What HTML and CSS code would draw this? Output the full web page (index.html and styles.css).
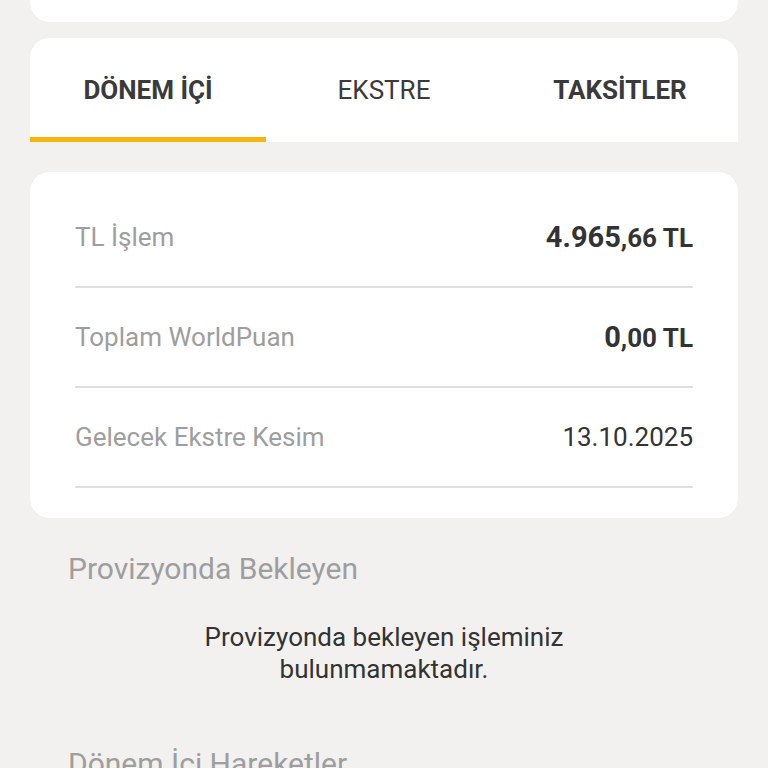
FILE: index.html
```html
<!DOCTYPE html>
<html lang="tr">
<head>
  <meta charset="UTF-8" />
  <meta name="viewport" content="width=device-width, initial-scale=1.0"/>
  <title>Kart Detay</title>
  <link rel="stylesheet" href="styles.css">
</head>
<body>
  <div class="top-card"></div>

  <div class="tabs">
    <div class="tab active">DÖNEM İÇİ</div>
    <div class="tab">EKSTRE</div>
    <div class="tab bold">TAKSİTLER</div>
  </div>

  <div class="summary">
    <div class="row">
      <span class="label">TL İşlem</span>
      <span class="value"><span class="int">4.965</span>,66 TL</span>
    </div>
    <div class="row">
      <span class="label">Toplam WorldPuan</span>
      <span class="value"><span class="int">0</span>,00 TL</span>
    </div>
    <div class="row">
      <span class="label">Gelecek Ekstre Kesim</span>
      <span class="date">13.10.2025</span>
    </div>
  </div>

  <h2 class="section-title">Provizyonda Bekleyen</h2>
  <p class="empty">Provizyonda bekleyen işleminiz<br>bulunmamaktadır.</p>

  <h2 class="section-title next">Dönem İçi Hareketler</h2>
</body>
</html>
```

FILE: styles.css
```css
* {
  box-sizing: border-box;
}
body {
  font-family: Roboto, 'Noto Sans', sans-serif;
  background: #f2f1f0;
  color: #333;
  margin: 0;
  padding: 0 30px;
  height: 768px;
  overflow: hidden;
}
.top-card {
  height: 22px;
  background: #fff;
  border-radius: 0 0 20px 20px;
}
.tabs {
  margin-top: 16px;
  height: 104px;
  background: #fff;
  border-radius: 20px 20px 0 0;
  display: flex;
}
.tab {
  flex: 1;
  display: flex;
  align-items: center;
  justify-content: center;
  padding-top: 4px;
  font-size: 26px;
  color: #3a3a3a;
  border-bottom: 5px solid transparent;
}
.tab.active {
  font-weight: 700;
  border-bottom-color: #f5b50a;
}
.tab.bold {
  font-weight: 700;
}
.summary {
  margin-top: 30px;
  background: #fff;
  border-radius: 20px;
  padding: 16px 45px 30px;
}
.row {
  height: 100px;
  display: flex;
  align-items: center;
  justify-content: space-between;
  border-bottom: 2px solid #e0e0e0;
}
.label {
  font-size: 26px;
  color: #9e9e9e;
}
.value {
  font-size: 26px;
  font-weight: 700;
  color: #333;
}
.value .int {
  font-size: 29px;
}
.date {
  font-size: 26px;
  color: #333;
}
.section-title {
  margin: 33px 0 0 38px;
  font-size: 30px;
  line-height: 36px;
  font-weight: 400;
  color: #9e9e9e;
}
.section-title.next {
  margin-top: 61px;
}
.empty {
  margin: 34px 0 0;
  text-align: center;
  font-size: 26px;
  line-height: 32px;
  color: #333;
}
```
